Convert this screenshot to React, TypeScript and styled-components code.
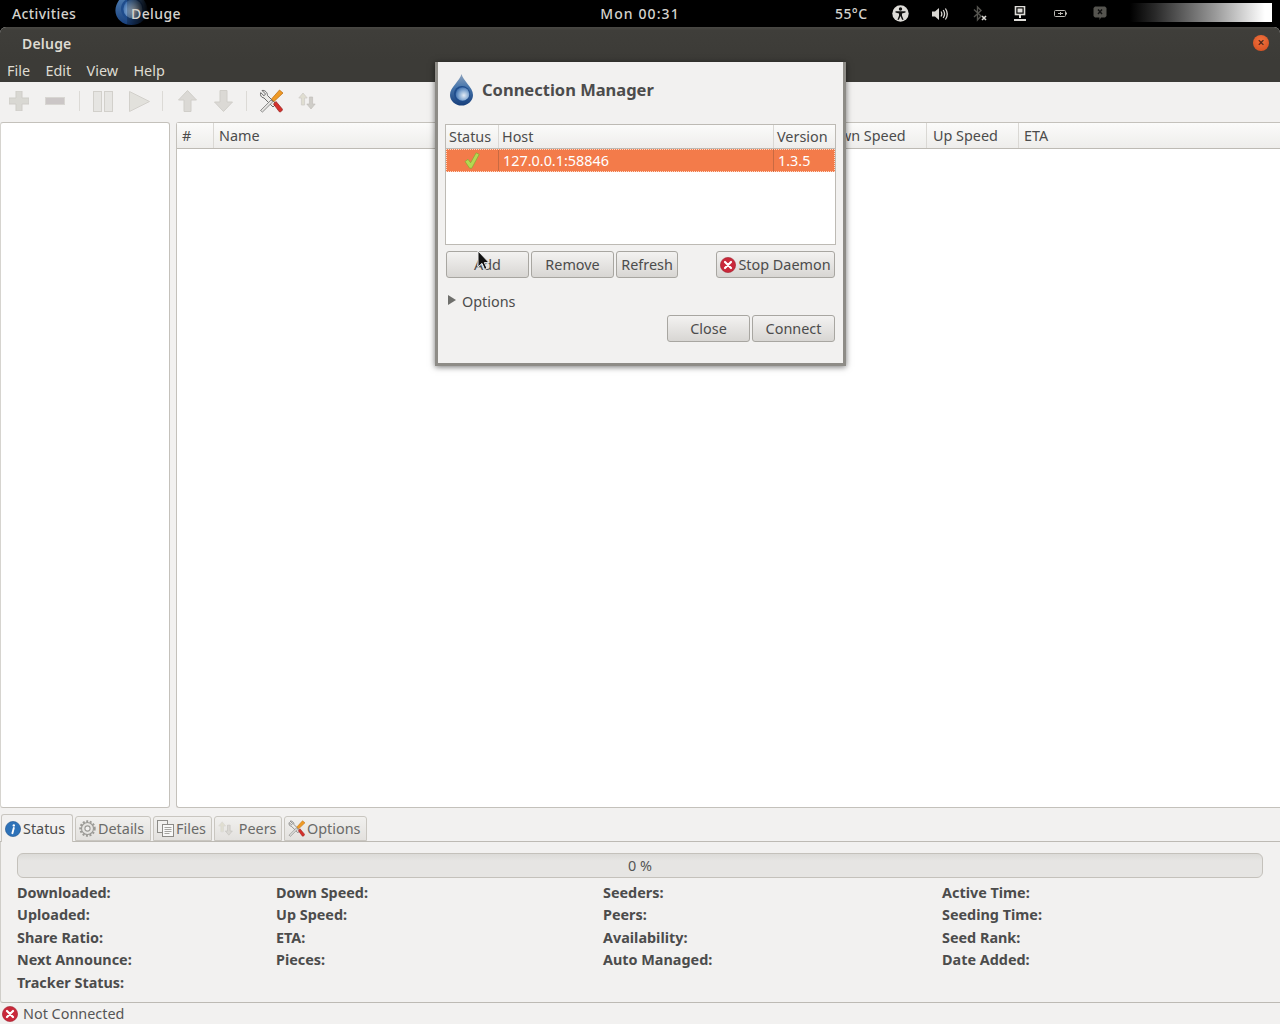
import React from "react";
import styled, { createGlobalStyle } from "styled-components";

const GlobalStyle = createGlobalStyle`
  html, body {
    margin: 0;
    padding: 0;
    background: #000;
  }
  body {
    font-family: "Noto Sans", "Open Sans", sans-serif;
    font-size: 14.4px;
    color: #4c4c4c;
  }
  * { box-sizing: border-box; }
`;

// Desktop shell
const Screen = styled.div`
  position: relative;
  width: 1280px;
  height: 1024px;
  overflow: hidden;
  display: flex;
  flex-direction: column;
  background: #000;
`;

const TopBar = styled.div`
  height: 27px;
  flex: none;
  display: grid;
  grid-template-columns: 113px 1fr;
  align-items: center;
  color: #d4d2cd;
  font-size: 14px;
  font-weight: 500;
  letter-spacing: 0.4px;
  position: relative;
`;

const Activities = styled.span`
  padding-left: 12px;
`;

const AppName = styled.div`
  display: flex;
  align-items: center;
  position: relative;
  height: 27px;
  overflow: hidden;
  width: 120px;

  span {
    margin-left: 18px;
    position: relative;
    z-index: 1;
  }
  svg {
    position: absolute;
    left: 1px;
    top: -19px;
  }
  &::after {
    content: "";
    position: absolute;
    left: 14px;
    top: 0;
    width: 22px;
    height: 27px;
    background: linear-gradient(90deg, rgba(0, 0, 0, 0.2), #000);
  }
`;

const Clock = styled.span`
  position: absolute;
  left: 0;
  right: 0;
  text-align: center;
  pointer-events: none;
  letter-spacing: 1.1px;
`;

const Tray = styled.div`
  position: absolute;
  top: 0;
  right: 8px;
  height: 27px;
  display: flex;
  align-items: center;
`;

const Temp = styled.span`
  width: 45px;
  white-space: nowrap;
`;

const TraySlot = styled.div`
  width: 40px;
  display: flex;
  justify-content: center;
  align-items: center;
`;

const TrayFade = styled.div`
  width: 142px;
  height: 19px;
  margin-left: 10px;
  margin-top: -2px;
  background: linear-gradient(90deg, #000 0%, #2a2a2a 18%, #999 60%, #fff 95%);
`;

const Window = styled.div`
  flex: 1;
  min-height: 0;
  display: flex;
  flex-direction: column;
  background: #f2f1f0;
  border-radius: 6px 6px 0 0;
  overflow: hidden;
`;

const TitleBar = styled.div`
  height: 33px;
  flex: none;
  padding: 0 11px 1px 22px;
  display: flex;
  align-items: center;
  justify-content: space-between;
  background: linear-gradient(#4a4945 0, #3f3e3a 3px, #3c3b37 100%);
  color: #dfdbd2;
  font-weight: 600;
  font-size: 14px;
  letter-spacing: 0.2px;
`;

const CloseDot = styled.div`
  width: 16px;
  height: 16px;
  border-radius: 50%;
  background: radial-gradient(circle at 50% 35%, #f0733f, #d24a1c);
  color: #4a2012;
  display: flex;
  align-items: center;
  justify-content: center;
  font-size: 12px;
  line-height: 1;
`;

const MenuBar = styled.div`
  height: 22px;
  flex: none;
  background: #3c3b37;
  color: #dfdbd2;
  display: flex;
  align-items: center;
  padding: 0 0 2px 7px;
  gap: 15.4px;
`;

// Toolbar
const ToolBar = styled.div`
  height: 40px;
  flex: none;
  display: flex;
  align-items: center;
  padding: 0 0 2px 8px;
`;

const ToolSlot = styled.div<{ $w: number }>`
  width: ${(p) => p.$w}px;
  display: flex;
  justify-content: center;
  align-items: center;
`;

const ToolSep = styled.div<{ $l: number; $r: number }>`
  width: 1px;
  height: 20px;
  background: #dcdad6;
  margin: 0 ${(p) => p.$r}px 0 ${(p) => p.$l}px;
`;

// Main panes
const Panes = styled.div`
  height: 686px;
  flex: none;
  display: flex;
  gap: 6px;
  position: relative;
`;

const SidePane = styled.div`
  width: 170px;
  background: #fff;
  border: 1px solid #c4c1bb;
  border-left-color: #d6d4cf;
  border-radius: 3px;
`;

const TorrentPane = styled.div`
  flex: 1;
  background: #fff;
  border: 1px solid #c4c1bb;
  border-right: none;
  border-radius: 3px 0 0 3px;
`;

const HeaderRow = styled.div<{ $h: number }>`
  height: ${(p) => p.$h}px;
  display: flex;
  background: linear-gradient(#fbfbfa, #eeedeb);
  border-bottom: 1px solid #bdbab4;
`;

const HeaderCell = styled.div<{ $w?: number; $pad?: number }>`
  ${(p) => (p.$w ? `width: ${p.$w}px; flex: none;` : "flex: 1;")}
  display: flex;
  align-items: center;
  padding-left: ${(p) => p.$pad ?? 6}px;
  border-right: 1px solid #dad8d4;
  white-space: nowrap;
  overflow: hidden;
  &:last-child {
    border-right: none;
  }
`;

const Grip = styled.div<{ $x: number; $y: number; $v?: boolean }>`
  position: absolute;
  left: ${(p) => p.$x}px;
  top: ${(p) => p.$y}px;
  width: ${(p) => (p.$v ? 4 : 10)}px;
  height: ${(p) => (p.$v ? 10 : 4)}px;
  background-image: radial-gradient(#b5b2ac 40%, transparent 50%);
  background-size: 2px 2px;
`;

// Tabs
const TabStrip = styled.div`
  height: 34px;
  flex: none;
  display: flex;
  align-items: flex-end;
  gap: 2px;
  padding-left: 1px;
  border-bottom: 1px solid #bdbab4;
`;

const Tab = styled.div<{ $w: number; $active?: boolean }>`
  width: ${(p) => p.$w}px;
  height: ${(p) => (p.$active ? 28 : 25)}px;
  margin-bottom: ${(p) => (p.$active ? -1 : 0)}px;
  display: flex;
  align-items: center;
  gap: 2px;
  padding-left: 3px;
  border: 1px solid #c9c6c0;
  border-bottom: ${(p) => (p.$active ? "none" : "1px solid #c9c6c0")};
  border-radius: 3px 3px 0 0;
  background: ${(p) =>
    p.$active ? "#f2f1f0" : "linear-gradient(#f1f0ee, #e3e1de)"};
  color: ${(p) => (p.$active ? "#4c4c4c" : "#6a6a68")};
  white-space: nowrap;
`;

const StatusPanel = styled.div`
  height: 161px;
  flex: none;
  padding: 11px 17px 0 17px;
  border-left: 1px solid #d0cec9;
  border-bottom: 1px solid #bdbab4;
  border-radius: 0 0 0 3px;
`;

const Progress = styled.div`
  height: 25px;
  margin-left: -1px;
  border: 1px solid #c4c1bb;
  border-radius: 6px;
  background: linear-gradient(#dcdbd8, #e6e5e3 30%);
  display: flex;
  align-items: center;
  justify-content: center;
  color: #555;
`;

const StatGrid = styled.div`
  display: grid;
  margin: 3px 0 0 -1px;
  grid-template-columns: 259px 327px 339px 1fr;
  grid-auto-rows: 22.5px;
  align-items: center;
  font-weight: 700;
  color: #4c4c4c;
`;

const StatusBar = styled.div`
  height: 21px;
  flex: none;
  display: flex;
  align-items: center;
  gap: 5px;
  padding-left: 2px;
  color: #555;
`;

// Connection Manager dialog
const Dialog = styled.div`
  position: absolute;
  left: 435px;
  top: 62px;
  width: 411px;
  height: 304px;
  background: #f2f1f0;
  border-left: 3px solid #8e8c87;
  border-right: 3px solid #8e8c87;
  border-bottom: 3px solid #8e8c87;
  box-shadow: 0 1px 6px rgba(0, 0, 0, 0.55);
  padding: 12px 7px 0 7px;
  display: flex;
  flex-direction: column;
`;

const DialogTitle = styled.div`
  display: flex;
  align-items: center;
  gap: 8px;
  height: 31px;
  margin-bottom: 1px;
  padding-left: 4px;
  font-size: 16.5px;
  font-weight: 700;
  color: #4c4c4c;
`;

const HostTree = styled.div`
  margin-top: 18px;
  height: 121px;
  background: #fff;
  border: 1px solid #bdbab4;
`;

const HostRow = styled.div`
  height: 23px;
  display: flex;
  background: #f37b4a;
  color: #fff;
  outline: 1px dotted #ffd9c7;
  outline-offset: -1px;
`;

const HostCell = styled.div<{ $w?: number; $center?: boolean }>`
  ${(p) => (p.$w ? `width: ${p.$w}px; flex: none;` : "flex: 1;")}
  display: flex;
  align-items: center;
  justify-content: ${(p) => (p.$center ? "center" : "flex-start")};
  padding-left: ${(p) => (p.$center ? 0 : 4)}px;
  border-right: 1px solid #c86a42;
  &:last-child {
    border-right: none;
  }
`;

const ButtonRow = styled.div<{ $top: number }>`
  display: flex;
  gap: 2px;
  margin-top: ${(p) => p.$top}px;
  padding: 0 1px;
`;

const Button = styled.div<{ $w: number; $push?: number }>`
  width: ${(p) => p.$w}px;
  height: 27px;
  flex: none;
  margin-left: ${(p) => p.$push ?? 0}px;
  display: flex;
  align-items: center;
  justify-content: center;
  gap: 2px;
  border: 1px solid #a8a6a1;
  border-radius: 3px;
  background: linear-gradient(#f3f2f1, #d8d6d3);
  white-space: nowrap;
`;

const OptionsRow = styled.div`
  display: flex;
  align-items: center;
  gap: 6px;
  margin-top: 13px;
  height: 20px;
  padding-left: 3px;
`;

const Arrow = styled.div`
  width: 0;
  height: 0;
  margin-top: -2px;
  border-left: 8px solid #6f6f6c;
  border-top: 5px solid transparent;
  border-bottom: 5px solid transparent;
`;

const Pointer = styled.svg`
  position: absolute;
  left: 477px;
  top: 250px;
`;

// Icons
const Drop = ({ size, id }: { size: number; id: string }) => (
  <svg width={size} height={size * 1.28} viewBox="0 0 25 32">
    <defs>
      <radialGradient id={id} cx="0.6" cy="0.6" r="0.65">
        <stop offset="0" stopColor="#e4ecf5" />
        <stop offset="0.5" stopColor="#8eb0d6" />
        <stop offset="1" stopColor="#3a6cab" />
      </radialGradient>
      <linearGradient id={`${id}-body`} x1="0" y1="0" x2="0" y2="1">
        <stop offset="0" stopColor="#8ea3bd" />
        <stop offset="0.4" stopColor="#4a78ad" />
        <stop offset="1" stopColor="#173f7c" />
      </linearGradient>
    </defs>
    <path
      d="M12.5 0C14 7 24 13 24 21a11.5 10.5 0 0 1-23 0C1 13 11 7 12.5 0Z"
      fill={`url(#${id}-body)`}
    />
    <ellipse cx="13" cy="20" rx="8" ry="8" fill="#1f4c8c" />
    <ellipse cx="13.5" cy="20" rx="6.8" ry="6.8" fill={`url(#${id})`} />
  </svg>
);

const ErrorIcon = ({ size = 16 }: { size?: number }) => (
  <svg width={size} height={size} viewBox="0 0 16 16">
    <circle cx="8" cy="8" r="7.6" fill="#c9283a" stroke="#a01f2c" strokeWidth="0.6" />
    <path d="M5 5l6 6M11 5l-6 6" stroke="#fff" strokeWidth="2.2" strokeLinecap="round" />
  </svg>
);

const Tools = ({ size }: { size: number }) => (
  <svg width={size} height={size} viewBox="0 0 24 24">
    <path
      d="M3 1.5 6.5 5 5 6.8 1.7 3.6C.9 6 2 8.7 5 9l9 9 3-3-8.5-8.5C8.6 3.7 6 .8 3 1.5Z"
      fill="#ecebe8"
      stroke="#6b6b6b"
      strokeWidth="1"
    />
    <path d="M1.5 21.5 12 11l1.8 1.8L3.5 23Z" fill="#e2e1de" stroke="#777" strokeWidth="0.8" />
    <path d="M12.5 10 20.5 1 24 4 15 12.5Z" fill="#ef9a25" stroke="#b86a10" strokeWidth="0.7" />
    <path d="M14.5 15 17 12.5l6.3 7.5c.8 1.2-1.8 3.6-3 2.8Z" fill="#d5302c" stroke="#94201c" strokeWidth="0.7" />
  </svg>
);

const UpDown = ({ size, color = "#cfcdc8" }: { size: number; color?: string }) => (
  <svg width={size} height={size} viewBox="0 0 18 18">
    <path d="M5 1 .8 6H3.4v7h3.2V6h2.6Z" fill="#e0ded1" stroke={color} strokeWidth="0.8" />
    <path d="M13 17l4.2-5h-2.6V5h-3.2v7H8.8Z" fill={color} stroke="#bdbbb6" strokeWidth="0.6" />
  </svg>
);

const Plus = () => (
  <svg width="20" height="20" viewBox="0 0 20 20">
    <path d="M7 0h6v7h7v6h-7v7H7v-7H0V7h7Z" fill="#d9d8d3" stroke="#cfcdc8" />
  </svg>
);

const Minus = () => (
  <svg width="20" height="8" viewBox="0 0 20 8">
    <rect x="0.5" y="0.5" width="19" height="7" fill="#cbc6c6" stroke="#d8d6d2" />
  </svg>
);

const Pause = () => (
  <svg width="20" height="21" viewBox="0 0 20 21">
    <rect x="0.5" y="0.5" width="8" height="20" fill="#e6e5e2" stroke="#d2d0cb" />
    <rect x="11.5" y="0.5" width="8" height="20" fill="#e6e5e2" stroke="#d2d0cb" />
  </svg>
);

const Play = () => (
  <svg width="21" height="21" viewBox="0 0 21 21">
    <path d="M.5.5 20.5 10.5.5 20.5Z" fill="#e2e1dc" stroke="#d2d0cb" />
  </svg>
);

const ArrowUp = () => (
  <svg width="19" height="22" viewBox="0 0 19 22">
    <path d="M9.5.5 18.5 10H13v11.5H6V10H.5Z" fill="#dbd9d5" stroke="#d0cec9" />
  </svg>
);

const ArrowDown = () => (
  <svg width="19" height="22" viewBox="0 0 19 22">
    <path d="M9.5 21.5 18.5 12H13V.5H6V12H.5Z" fill="#dbd9d5" stroke="#d0cec9" />
  </svg>
);

const Info = () => (
  <svg width="16" height="16" viewBox="0 0 16 16">
    <circle cx="8" cy="8" r="7.6" fill="#2e72b8" stroke="#1d538f" strokeWidth="0.6" />
    <circle cx="8.8" cy="4.4" r="1.2" fill="#fff" />
    <path d="M8.8 7 7.4 12.2" stroke="#fff" strokeWidth="1.9" strokeLinecap="round" />
  </svg>
);

const Gear = () => (
  <svg width="17" height="17" viewBox="0 0 17 17" fill="none">
    <circle cx="8.5" cy="8.5" r="6" stroke="#9b9a96" strokeWidth="1.1" fill="#e6e5e2" />
    <circle cx="8.5" cy="8.5" r="7.2" stroke="#9b9a96" strokeWidth="2" strokeDasharray="2 1.6" />
    <circle cx="8.5" cy="8.5" r="2.6" stroke="#9b9a96" strokeWidth="1.1" fill="#f2f1f0" />
  </svg>
);

const FilesIcon = () => (
  <svg width="17" height="17" viewBox="0 0 17 17">
    <rect x="0.5" y="0.5" width="10" height="12" fill="#f1f0ee" stroke="#8c8b87" />
    <rect x="5.5" y="4.5" width="11" height="12" fill="#f8f8f7" stroke="#8c8b87" />
    <path d="M7.5 7.5h7M7.5 9.5h7M7.5 11.5h7M7.5 13.5h5" stroke="#a5a4a0" />
  </svg>
);

const Volume = () => (
  <svg width="16" height="14" viewBox="0 0 16 14" fill="none">
    <path d="M0 4.5h3L7 1v12L3 9.5H0Z" fill="#d8d6d2" />
    <path d="M9 4.5c1 1.5 1 3.5 0 5M11.2 3c1.7 2.5 1.7 5.5 0 8M13.4 1.5c2.4 3.5 2.4 7.5 0 11" stroke="#d8d6d2" strokeWidth="1.3" />
  </svg>
);

const A11y = () => (
  <svg width="17" height="17" viewBox="0 0 17 17">
    <circle cx="8.5" cy="8.5" r="8.2" fill="#dedcd8" />
    <circle cx="8.5" cy="4" r="1.7" fill="#111" />
    <path d="M3.5 6.3h10v1.3l-3.5.8v2.4l1.6 4h-1.5L8.5 11l-1.6 3.8H5.4l1.6-4V8.4l-3.5-.8Z" fill="#111" />
  </svg>
);

const Bluetooth = () => (
  <svg width="14" height="17" viewBox="0 0 14 17" fill="none">
    <path d="M1 4.5 8 11 4.5 15V2L8 5.5 1 12" stroke="#55544f" strokeWidth="1.4" />
    <path d="M9 11l4 4M13 11l-4 4" stroke="#d8d6d2" strokeWidth="1.6" />
  </svg>
);

const Network = () => (
  <svg width="12" height="16" viewBox="0 0 12 16">
    <rect x="1.5" y="0.5" width="9" height="8" fill="none" stroke="#dedcd8" strokeWidth="1.6" />
    <rect x="3.5" y="2.5" width="5" height="4" fill="#dedcd8" />
    <rect x="5" y="9" width="2" height="3" fill="#dedcd8" />
    <rect x="0" y="13" width="12" height="2" fill="#dedcd8" />
  </svg>
);

const Battery = () => (
  <svg width="13" height="7" viewBox="0 0 13 7" fill="none">
    <rect x="0.5" y="0.5" width="11" height="6" rx="1" stroke="#bcbab5" />
    <path d="M12.5 2.5v2M4 3.5h5M6.5 2v3" stroke="#bcbab5" />
  </svg>
);

const Chat = () => (
  <svg width="14" height="15" viewBox="0 0 14 15">
    <path d="M2 .5h10l1.5 1.5v8L12 11.5H8L6.5 14v-2.5H2L.5 10V2Z" fill="#55544f" />
    <path d="M5 3.5l4 4.5M9 3.5 5 8" stroke="#111" strokeWidth="1.4" />
  </svg>
);

const statRows = [
  ["Downloaded:", "Down Speed:", "Seeders:", "Active Time:"],
  ["Uploaded:", "Up Speed:", "Peers:", "Seeding Time:"],
  ["Share Ratio:", "ETA:", "Availability:", "Seed Rank:"],
  ["Next Announce:", "Pieces:", "Auto Managed:", "Date Added:"],
  ["Tracker Status:", "", "", ""],
];

const App: React.FC = () => (
  <Screen>
    <GlobalStyle />
    <TopBar>
      <Activities>Activities</Activities>
      <AppName>
        <Drop size={35} id="drop-top" />
        <span>Deluge</span>
      </AppName>
      <Clock>Mon 00:31</Clock>
      <Tray>
        <Temp>55°C</Temp>
        <TraySlot><A11y /></TraySlot>
        <TraySlot><Volume /></TraySlot>
        <TraySlot><Bluetooth /></TraySlot>
        <TraySlot><Network /></TraySlot>
        <TraySlot><Battery /></TraySlot>
        <TraySlot><Chat /></TraySlot>
        <TrayFade />
      </Tray>
    </TopBar>

    <Window>
      <TitleBar>
        <span>Deluge</span>
        <CloseDot>×</CloseDot>
      </TitleBar>
      <MenuBar>
        <span>File</span>
        <span>Edit</span>
        <span>View</span>
        <span>Help</span>
      </MenuBar>

      <ToolBar>
        <ToolSlot $w={22}><Plus /></ToolSlot>
        <ToolSlot $w={14} />
        <ToolSlot $w={22}><Minus /></ToolSlot>
        <ToolSep $l={13} $r={12} />
        <ToolSlot $w={22}><Pause /></ToolSlot>
        <ToolSlot $w={14} />
        <ToolSlot $w={22}><Play /></ToolSlot>
        <ToolSep $l={12} $r={13} />
        <ToolSlot $w={22}><ArrowUp /></ToolSlot>
        <ToolSlot $w={14} />
        <ToolSlot $w={22}><ArrowDown /></ToolSlot>
        <ToolSep $l={12} $r={12} />
        <ToolSlot $w={24}><Tools size={24} /></ToolSlot>
        <ToolSlot $w={14} />
        <ToolSlot $w={20}><UpDown size={18} /></ToolSlot>
      </ToolBar>

      <Panes>
        <SidePane />
        <TorrentPane>
          <HeaderRow $h={26}>
            <HeaderCell $w={37} $pad={5}>#</HeaderCell>
            <HeaderCell $pad={5}>Name</HeaderCell>
            <HeaderCell $w={112}>Down Speed</HeaderCell>
            <HeaderCell $w={92}>Up Speed</HeaderCell>
            <HeaderCell $w={261} $pad={5}>ETA</HeaderCell>
          </HeaderRow>
        </TorrentPane>
        <Grip $x={171} $y={337} $v />
      </Panes>

      <TabStrip>
        <Tab $w={72} $active><Info />Status</Tab>
        <Tab $w={76}><Gear />Details</Tab>
        <Tab $w={59}><FilesIcon />Files</Tab>
        <Tab $w={68}><UpDown size={15} color="#dad8d3" />&nbsp;Peers</Tab>
        <Tab $w={83}><Tools size={17} />Options</Tab>
      </TabStrip>

      <StatusPanel>
        <Progress>0 %</Progress>
        <StatGrid>
          {statRows.flat().map((label, i) => (
            <span key={i}>{label}</span>
          ))}
        </StatGrid>
      </StatusPanel>

      <StatusBar>
        <ErrorIcon />
        Not Connected
      </StatusBar>
    </Window>

    <Grip $x={636} $y={809} />

    <Dialog>
      <DialogTitle>
        <Drop size={25} id="drop-dialog" />
        Connection Manager
      </DialogTitle>
      <HostTree>
        <HeaderRow $h={24}>
          <HeaderCell $w={53} $pad={3}>Status</HeaderCell>
          <HeaderCell $pad={3}>Host</HeaderCell>
          <HeaderCell $w={61} $pad={3}>Version</HeaderCell>
        </HeaderRow>
        <HostRow>
          <HostCell $w={53} $center>
            <svg width="16" height="17" viewBox="0 0 16 17">
              <path d="M1 9.5l3-2.2 2.6 3.4L12.2.8l3 1.6-7.4 13.8H5.6Z" fill="#b4d852" stroke="#86a833" strokeWidth="0.7" />
            </svg>
          </HostCell>
          <HostCell>127.0.0.1:58846</HostCell>
          <HostCell $w={61}>1.3.5</HostCell>
        </HostRow>
      </HostTree>

      <ButtonRow $top={6}>
        <Button $w={83}>Add</Button>
        <Button $w={83}>Remove</Button>
        <Button $w={62}>Refresh</Button>
        <Button $w={119} $push={36}>
          <ErrorIcon />
          Stop Daemon
        </Button>
      </ButtonRow>

      <OptionsRow>
        <Arrow />
        Options
      </OptionsRow>

      <ButtonRow $top={4}>
        <Button $w={83} $push={221}>Close</Button>
        <Button $w={83}>Connect</Button>
      </ButtonRow>
    </Dialog>

    <Pointer width="13" height="21" viewBox="0 0 13 21">
      <path d="M1 1v16l4-3.6 2.6 6 2.4-1-2.6-5.8H12Z" fill="#111" stroke="#eee" strokeWidth="1" />
    </Pointer>
  </Screen>
);

export default App;
